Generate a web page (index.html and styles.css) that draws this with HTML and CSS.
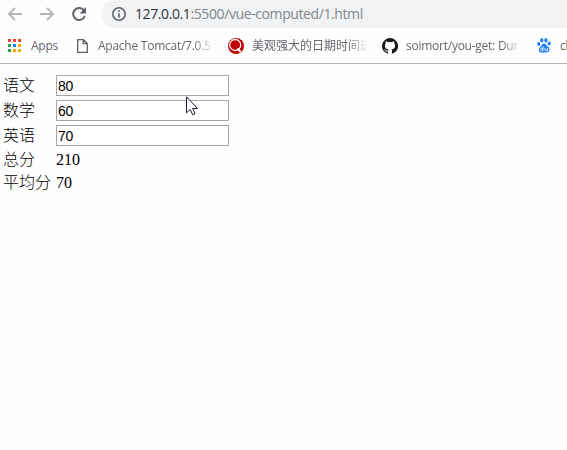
FILE: index.html
```html
<!DOCTYPE html>
<html lang="zh">
<head>
<meta charset="utf-8">
<title>1.html</title>
<link rel="stylesheet" href="styles.css">
</head>
<body>
<header class="chrome">
  <div class="toolbar">
    <svg class="nav" width="16" height="16" viewBox="0 0 16 16"><path d="M15 8H2M8 2L2 8l6 6"/></svg>
    <svg class="nav" width="16" height="16" viewBox="0 0 16 16"><path d="M1 8h13M8 2l6 6-6 6"/></svg>
    <svg class="reload" width="16" height="16" viewBox="0 0 16 16"><path class="arc" d="M13 4.5A6 6 0 1 0 13.8 10"/><path class="tip" d="M15 1v6.5H8.5z"/></svg>
    <div class="address">
      <svg class="info" width="14" height="14" viewBox="0 0 14 14"><circle cx="7" cy="7" r="6.2"/><path d="M7 3.2v1.7M7 6.2v4.6"/></svg>
      <span class="url"><span class="host">127.0.0.1</span>:5500/vue-computed/1.html</span>
    </div>
  </div>
  <nav class="bookmarks">
    <div class="bookmark apps">
      <svg width="13" height="13" viewBox="0 0 13 13"><path fill="#ea4335" d="M0 0h3v3H0zM5 0h3v3H5zM10 0h3v3h-3z"/><path fill="#34a05a" d="M0 5h3v3H0zM0 10h3v3H0z"/><path fill="#1a82f7" d="M5 5h3v3H5z"/><path fill="#f9ab00" d="M10 5h3v3h-3zM5 10h3v3H5zM10 10h3v3h-3z"/></svg>
      <span class="label">Apps</span>
    </div>
    <div class="bookmark tomcat">
      <svg width="11" height="14" viewBox="0 0 11 14"><path fill="none" stroke="#5f6368" stroke-width="1.3" d="M.7.7h5.8l3.8 3.8v8.8H.7zM6.3.7v4h4"/></svg>
      <span class="label fade">Apache Tomcat/7.0.5</span>
    </div>
    <div class="bookmark date">
      <svg width="16" height="16" viewBox="0 0 16 16"><circle cx="8" cy="8" r="8" fill="#c00000"/><circle cx="7.2" cy="7" r="5.5" fill="#c00000" stroke="#fff" stroke-width="1.3"/><path d="M9.5 10.5l3.2 3.5" stroke="#fff" stroke-width="2"/></svg>
      <span class="label fade cjk">美观强大的日期时间选</span>
    </div>
    <div class="bookmark github">
      <svg width="16" height="16" viewBox="0 0 16 16"><path fill="#17191c" d="M8 0a8 8 0 0 0-2.53 15.59c.4.07.55-.17.55-.38v-1.49c-2.23.48-2.7-.94-2.7-.94-.36-.93-.89-1.17-.89-1.17-.73-.5.05-.49.05-.49.81.06 1.23.83 1.23.83.72 1.23 1.88.87 2.34.67.07-.52.28-.87.5-1.07-1.77-.2-3.64-.89-3.64-3.95 0-.88.31-1.59.83-2.15-.09-.2-.36-1.01.07-2.12 0 0 .68-.22 2.2.82a7.700 7.700 0 0 1 4 0c1.530-1.040 2.200-.820 2.200-.820.440 1.110.170 1.920.080 2.120.510.560.820 1.270.820 2.150 0 3.070-1.870 3.750-3.650 3.950.290.250.540.730.540 1.480v2.200c0 .210.150.460.550.380A8 8 0 0 0 8 0z"/></svg>
      <span class="label fade">soimort/you-get: Dur</span>
    </div>
    <div class="bookmark baidu">
      <svg width="14" height="15" viewBox="0 0 14 15"><g fill="#2480f5"><ellipse cx="1.8" cy="6" rx="1.6" ry="2.1"/><ellipse cx="4.8" cy="2.3" rx="1.6" ry="2.2"/><ellipse cx="8.9" cy="2.3" rx="1.6" ry="2.2"/><ellipse cx="12.2" cy="5.5" rx="1.6" ry="2.1"/><path d="M7 5.5c1.8 0 2.3 1.7 3.6 2.8 1.7 1.5 2.3 2.7 1.7 4.3-.6 2.2-2.8 2-5.3 1.8-2.5.3-4.4.3-5-1.4-.7-2 .1-3 1.6-4.4C5 7.4 5.2 5.5 7 5.5z"/></g><path fill="none" stroke="#fff" stroke-width=".9" d="M6 8.5v4H4.500q-1-.1-1-1.100t1-1.100H6M8 10v1.700q0 .8.800.8h1.700V10"/></svg>
      <span class="label">cl</span>
    </div>
  </nav>
</header>
<main>
  <table class="scores">
    <tr><td>语文</td><td><input type="text" value="80"></td></tr>
    <tr><td>数学</td><td><input type="text" value="60"></td></tr>
    <tr><td>英语</td><td><input type="text" value="70"></td></tr>
    <tr class="result"><td>总分</td><td>210</td></tr>
    <tr class="result"><td>平均分</td><td>70</td></tr>
  </table>
</main>
<svg class="cursor" width="13" height="20" viewBox="0 0 13 20"><path fill="#fff" stroke="#20203a" stroke-width="1" d="M.5 .8v16l3.700-3.300 2.500 5.300 2.400-1.100-2.500-5.200h5z"/></svg>
</body>
</html>
```
FILE: styles.css
```css
* { box-sizing: border-box; }
body {
  margin: 0;
  height: 450px;
  overflow: hidden;
  background: #fefefe;
  color: #000;
  font-family: "Liberation Serif", "Noto Sans CJK SC", serif;
}
svg { display: block; flex: none; }
.chrome {
  height: 64px;
  border-bottom: 1px solid #b3b3b3;
  font-family: "Open Sans", "Noto Sans CJK SC", sans-serif;
}
.toolbar {
  display: flex;
  align-items: center;
  gap: 16px;
  height: 28px;
  padding-left: 7px;
}
.nav { fill: none; stroke: #b5b6b8; stroke-width: 2; }
.reload .arc { fill: none; stroke: #5f6368; stroke-width: 2; }
.reload .tip { fill: #5f6368; }
.address {
  display: flex;
  align-items: center;
  flex: 1;
  gap: 9px;
  height: 28px;
  margin-left: -2px;
  padding-left: 11px;
  border-radius: 14px 0 0 14px;
  background: #f1f3f4;
}
.info { fill: none; stroke: #5f6368; stroke-width: 1.6; }
.url {
  font-size: 14px;
  letter-spacing: -0.4px;
  line-height: 28px;
  color: #80868b;
  white-space: nowrap;
}
.host { color: #303438; }
.bookmarks {
  display: flex;
  height: 35px;
  padding-left: 8px;
  overflow: hidden;
}
.bookmark {
  display: flex;
  align-items: center;
  flex: none;
  gap: 10px;
  color: #63676c;
  font-size: 12px;
  letter-spacing: -0.25px;
  line-height: 35px;
  white-space: nowrap;
}
.fade {
  width: 114px;
  mask-image: linear-gradient(to right, #000 84%, rgba(0, 0, 0, 0.1));
}
.cjk { letter-spacing: 0; overflow: hidden; }
.apps { width: 69px; }
.tomcat { width: 151px; }
.date { width: 154px; gap: 8px; }
.github { width: 155px; gap: 8px; }
.baidu { gap: 9px; }
.scores {
  margin: 8px 0 0 1px;
  border-spacing: 2px;
  font-size: 16px;
}
.scores td {
  height: 23px;
  padding: 1px;
  line-height: 19px;
  white-space: nowrap;
}
.scores td:first-child {
  width: 50px;
  padding: 1px 2px 1px 0;
  font-weight: 300;
}
.scores .result td { height: 21px; }
.scores input {
  display: block;
  width: 173px;
  height: 21px;
  padding: 1px;
  border: 1px solid #a6a6a6;
  border-radius: 0;
  background: #fff;
  color: #000;
  font: 14px "Liberation Sans", sans-serif;
  letter-spacing: -0.3px;
}
.cursor { position: absolute; left: 186px; top: 96px; }
```
